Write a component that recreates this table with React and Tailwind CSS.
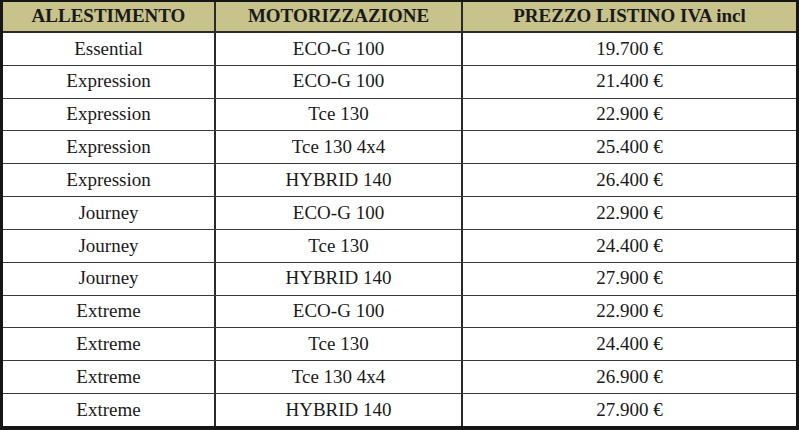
import React from 'react';

const rows = [
  ['Essential', 'ECO-G 100', '19.700 €'],
  ['Expression', 'ECO-G 100', '21.400 €'],
  ['Expression', 'Tce 130', '22.900 €'],
  ['Expression', 'Tce 130 4x4', '25.400 €'],
  ['Expression', 'HYBRID 140', '26.400 €'],
  ['Journey', 'ECO-G 100', '22.900 €'],
  ['Journey', 'Tce 130', '24.400 €'],
  ['Journey', 'HYBRID 140', '27.900 €'],
  ['Extreme', 'ECO-G 100', '22.900 €'],
  ['Extreme', 'Tce 130', '24.400 €'],
  ['Extreme', 'Tce 130 4x4', '26.900 €'],
  ['Extreme', 'HYBRID 140', '27.900 €'],
];

export default function App() {
  return (
    <div className="w-[799px] h-[430px] bg-white text-[#1a1a1a] font-['Liberation_Serif','Times_New_Roman',serif]">
      <div className="h-full flex flex-col border-t-2 border-x-[3px] border-b-4 border-[#161616]">
        <div className="h-[31px] flex bg-[#c7c38a] border-b-2 border-[#2a2a2a] text-[19px] font-bold">
          <div className="w-[213px] flex items-center justify-center border-r-2 border-[#2a2a2a]">ALLESTIMENTO</div>
          <div className="w-[247px] flex items-center justify-center border-r-2 border-[#2a2a2a]">MOTORIZZAZIONE</div>
          <div className="flex-1 flex items-center justify-center">PREZZO LISTINO IVA incl</div>
        </div>
        {rows.map((r, i) => (
          <div
            key={i}
            className={`flex-1 flex text-[19px] ${i < rows.length - 1 ? 'border-b-[1.5px] border-[#3a3a3a]' : ''}`}
          >
            <div className="w-[213px] flex items-center justify-center border-r-2 border-[#2a2a2a]">{r[0]}</div>
            <div className="w-[247px] flex items-center justify-center border-r-2 border-[#2a2a2a]">{r[1]}</div>
            <div className="flex-1 flex items-center justify-center">{r[2]}</div>
          </div>
        ))}
      </div>
    </div>
  );
}
